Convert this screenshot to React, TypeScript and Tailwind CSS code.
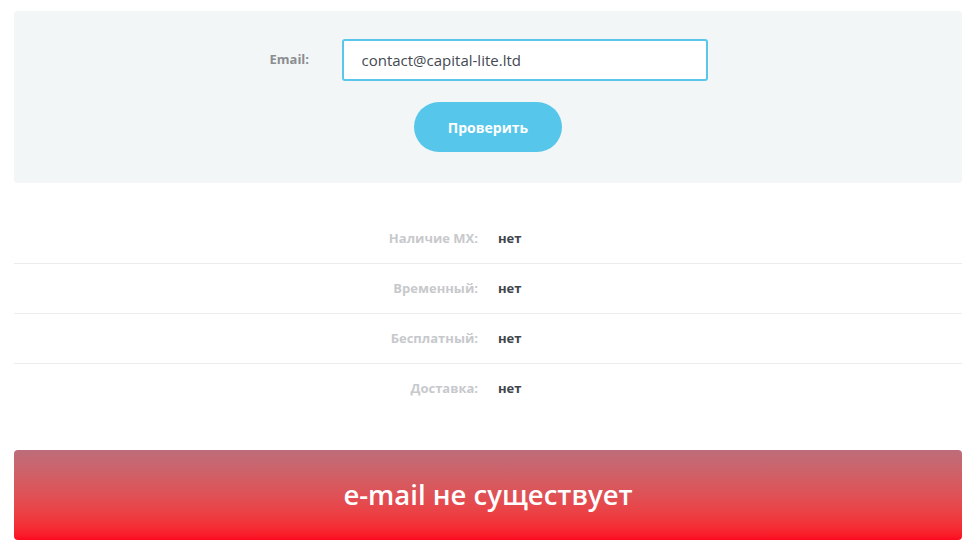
import React from 'react';

const rows: { label: string; value: string }[] = [
  { label: 'Наличие MX:', value: 'нет' },
  { label: 'Временный:', value: 'нет' },
  { label: 'Бесплатный:', value: 'нет' },
  { label: 'Доставка:', value: 'нет' },
];

const App: React.FC = () => {
  return (
    <div className="min-h-screen bg-white font-['Open_Sans',sans-serif]">
      <div className="w-[948px] ml-[14px] pt-[11px]">
        <div className="bg-[#f2f6f7] rounded-[4px] h-[172px] flex flex-col items-center pt-[28px]">
          <div className="flex items-center">
            <label className="w-[73px] text-[13px] font-bold text-[#8a8d90] pl-[1px]">Email:</label>
            <input
              type="text"
              defaultValue="contact@capital-lite.ltd"
              className="w-[366px] h-[42px] bg-white border-2 border-[#5bc6ea] rounded-[3px] pl-[18px] text-[15px] font-medium text-[#444a52] outline-none"
            />
          </div>
          <button className="mt-[21px] w-[148px] h-[50px] rounded-full bg-[#56c6eb] text-white text-[14px] font-bold">
            Проверить
          </button>
        </div>

        <div className="mt-[31px]">
          {rows.map((row, i) => (
            <div
              key={row.label}
              className={`grid grid-cols-2 items-center h-[50px] ${i < rows.length - 1 ? 'border-b border-[#ececec]' : ''}`}
            >
              <div className="text-right pr-[10px] text-[13px] font-bold text-[#c7c9cc]">{row.label}</div>
              <div className="pl-[10px] text-[13px] font-bold text-[#40454b]">{row.value}</div>
            </div>
          ))}
        </div>

        <div className="mt-[36px] h-[90px] rounded-[4px] bg-gradient-to-b from-[#bd6d7a] to-[#fd0520] flex items-center justify-center">
          <span className="text-white text-[27.5px] font-semibold">e-mail не существует</span>
        </div>
      </div>
    </div>
  );
};

export default App;
